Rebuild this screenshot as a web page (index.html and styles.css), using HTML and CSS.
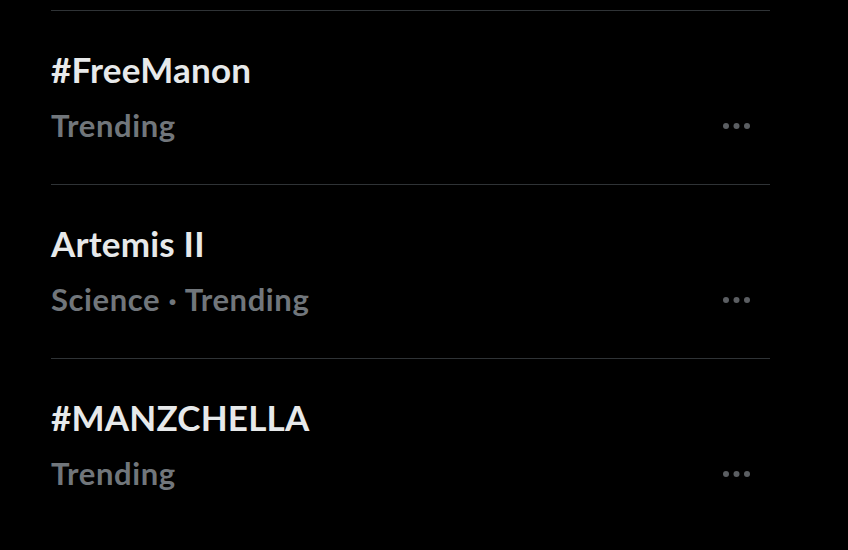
FILE: index.html
```html
<!DOCTYPE html>
<html>
<head>
<meta charset="utf-8">
<link rel="stylesheet" href="styles.css">
</head>
<body>
<div class="list">
  <div class="trend">
    <div class="title">#FreeManon</div>
    <div class="meta">Trending</div>
    <div class="more"><svg width="30" height="8" viewBox="0 0 30 8"><circle cx="4" cy="4" r="3"/><circle cx="14.5" cy="4" r="3"/><circle cx="25" cy="4" r="3"/></svg></div>
  </div>
  <div class="trend">
    <div class="title">Artemis II</div>
    <div class="meta">Science · Trending</div>
    <div class="more"><svg width="30" height="8" viewBox="0 0 30 8"><circle cx="4" cy="4" r="3"/><circle cx="14.5" cy="4" r="3"/><circle cx="25" cy="4" r="3"/></svg></div>
  </div>
  <div class="trend">
    <div class="title">#MANZCHELLA</div>
    <div class="meta">Trending</div>
    <div class="more"><svg width="30" height="8" viewBox="0 0 30 8"><circle cx="4" cy="4" r="3"/><circle cx="14.5" cy="4" r="3"/><circle cx="25" cy="4" r="3"/></svg></div>
  </div>
</div>
</body>
</html>
```
FILE: styles.css
```css
html, body {
  margin: 0;
  padding: 0;
  background: #000;
  height: 100%;
  overflow: hidden;
}
body {
  font-family: Lato, "Noto Sans", sans-serif;
}
.list {
  margin-left: 51px;
  width: 719px;
  padding-top: 10px;
}
.trend {
  display: grid;
  grid-template-columns: 1fr auto;
  grid-template-rows: auto auto;
  border-top: 1px solid #2f3336;
  padding: 37px 18px 40px 0;
  row-gap: 17px;
}
.title {
  grid-column: 1;
  grid-row: 1;
  font-size: 35px;
  font-weight: 700;
  color: #e7e9ea;
  line-height: 42px;
  letter-spacing: 0.2px;
}
.meta {
  grid-column: 1;
  grid-row: 2;
  font-size: 31px;
  font-weight: 700;
  color: #71767b;
  line-height: 37px;
  letter-spacing: 0.6px;
}
.more {
  grid-column: 2;
  grid-row: 2;
  align-self: center;
  display: flex;
  fill: #5b5e62;
}
.more svg {
  display: block;
}
```
